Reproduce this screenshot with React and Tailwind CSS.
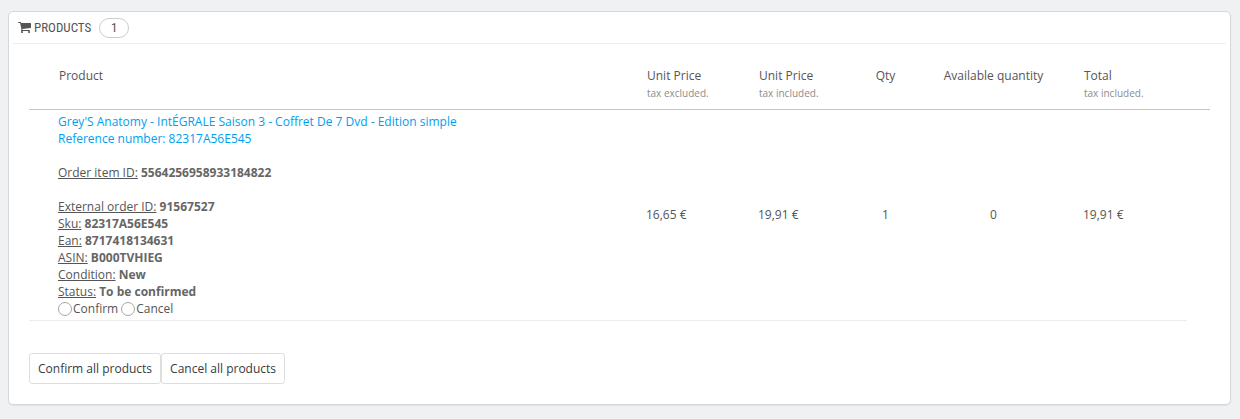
const details = [
  { label: "External order ID:", value: "91567527" },
  { label: "Sku:", value: "82317A56E545" },
  { label: "Ean:", value: "8717418134631" },
  { label: "ASIN:", value: "B000TVHIEG" },
  { label: "Condition:", value: "New" },
  { label: "Status:", value: "To be confirmed" },
];

function CartIcon({ className }) {
  return (
    <svg viewBox="0 256 1664 1408" fill="currentColor" aria-hidden="true" className={className}>
      <path d="M640 1536q0 52-38 90t-90 38t-90-38t-38-90t38-90t90-38t90 38t38 90zM1536 1536q0 52-38 90t-90 38t-90-38t-38-90t38-90t90-38t90 38t38 90zM1664 448v512q0 24-16.500 42.500t-40.500 21.500l-1044 122q13 60 13 70q0 16-24 64h920q26 0 45 19t19 45t-19 45t-45 19h-1024q-26 0-45-19t-19-45q0-11 8-31.500t16-36t21.500-40t15.500-29.500l-177-823h-204q-26 0-45-19t-19-45t19-45t45-19h256q16 0 28.500 6.500t19.500 15.500t13 24.500t8 26t5.500 29.500t4.500 26h1201q26 0 45 19t19 45z" />
    </svg>
  );
}

function Detail({ label, value }) {
  return (
    <div>
      <span className="underline">{label}</span> <strong className="text-[#666]">{value}</strong>
    </div>
  );
}

function Choice({ id, children }) {
  return (
    <label htmlFor={id} className="flex items-center gap-px">
      <input
        type="radio"
        id={id}
        name="status"
        className="size-3.5 appearance-none rounded-full border border-[#a6a6a6] bg-white checked:border-4"
      />
      {children}
    </label>
  );
}

function HeadCell({ title, note, className = "" }) {
  return (
    <th scope="col" className={`border-b border-[#a0d0eb] pr-2 pb-1.5 pl-[9px] align-top font-normal ${className}`}>
      {title}
      {note && <small className="block text-[10px] leading-[19px] text-[#8c8c8c]">{note}</small>}
    </th>
  );
}

function Button({ children }) {
  return (
    <button
      type="button"
      className="rounded-[3px] border border-[#dedede] bg-white px-2 py-1.5 leading-[17px] text-[#363a41] hover:bg-gray-100"
    >
      {children}
    </button>
  );
}

export default function App() {
  return (
    <div className="min-h-screen bg-[#eff1f2] px-2 pt-[11px] pb-3.5 font-['Open_Sans',sans-serif] text-[12px] leading-[17px] text-[#555]">
      <section className="mr-px rounded-[5px] border border-[#d3d8db] bg-white px-1 pb-5 shadow-[0_1px_1px_rgba(0,0,0,0.06)]">
        {/* Panel heading */}
        <h3 className="flex h-8 items-center border-b border-[#eee] px-[5px] font-['Roboto_Condensed','Open_Sans_Condensed',sans-serif] text-[13px]">
          <CartIcon className="mr-[3px] h-[11px] w-[13px]" />
          PRODUCTS
          <span className="ml-2 flex h-5 w-[30px] items-center justify-center rounded-full border border-[#ccc]">
            1
          </span>
        </h3>

        {/* Order lines */}
        <div className="px-4 pt-[23px]">
          <table className="w-full table-fixed border-separate border-spacing-0 text-left">
            <colgroup>
              <col className="w-[21px]" />
              <col />
              <col className="w-[112px]" />
              <col className="w-[109px]" />
              <col className="w-[52px]" />
              <col className="w-[164px]" />
              <col className="w-[112px]" />
              <col className="w-[23px]" />
            </colgroup>
            <thead>
              <tr>
                <td className="border-b border-[#a0d0eb]" />
                <HeadCell title="Product" />
                <HeadCell title="Unit Price" note="tax excluded." />
                <HeadCell title="Unit Price" note="tax included." />
                <HeadCell title="Qty" className="text-center" />
                <HeadCell title="Available quantity" className="text-center" />
                <HeadCell title="Total" note="tax included." />
                <td className="border-b border-[#a0d0eb]" />
              </tr>
            </thead>
            <tbody>
              <tr className="[&>td]:border-b [&>td]:border-[#eaedef]">
                <td />
                <td className="px-2 py-[3px]">
                  <a href="#product" className="block text-[#00a0f0] hover:underline">
                    Grey'S Anatomy - IntÉGRALE Saison 3 - Coffret De 7 Dvd - Edition simple
                    <br />
                    Reference number: 82317A56E545
                  </a>
                  <div className="py-[17px]">
                    <Detail label="Order item ID:" value="5564256958933184822" />
                  </div>
                  {details.map((detail) => (
                    <Detail key={detail.label} {...detail} />
                  ))}
                  <div className="flex gap-[3px]">
                    <Choice id="confirm">Confirm</Choice>
                    <Choice id="cancel">Cancel</Choice>
                  </div>
                </td>
                <td className="px-2 pb-0.5">16,65 €</td>
                <td className="px-2 pb-0.5">19,91 €</td>
                <td className="pr-2 pb-0.5 pl-[9px] text-center">1</td>
                <td className="pr-2 pb-0.5 pl-[9px] text-center">0</td>
                <td className="px-2 pb-0.5">19,91 €</td>
              </tr>
            </tbody>
          </table>

          <div className="mt-8 flex">
            <Button>Confirm all products</Button>
            <Button>Cancel all products</Button>
          </div>
        </div>
      </section>
    </div>
  );
}
